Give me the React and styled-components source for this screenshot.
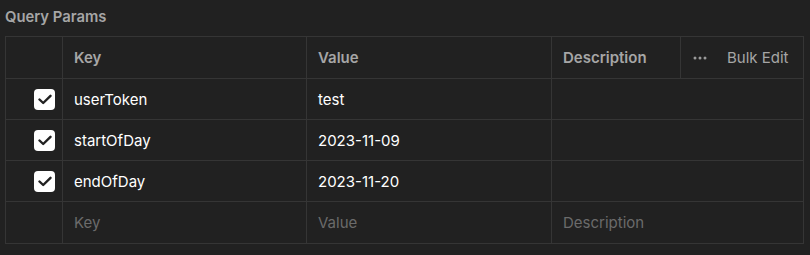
import React from "react";
import styled, { createGlobalStyle } from "styled-components";

const Global = createGlobalStyle`
  html, body {
    margin: 0;
    background: #212121;
  }
  body {
    font-family: Inter, "Noto Sans", sans-serif;
    -webkit-font-smoothing: antialiased;
  }
`;

const Page = styled.div`
  padding: 0 6px 0 5px;
  width: 810px;
  height: 255px;
  box-sizing: border-box;
`;

const Title = styled.div`
  height: 36px;
  line-height: 35px;
  font-size: 14.8px;
  font-weight: 600;
  color: #a6a6a6;
`;

const Table = styled.div`
  border: 1px solid #353535;
  width: 799px;
  box-sizing: border-box;
`;

const Row = styled.div`
  display: grid;
  grid-template-columns: ${(p) => (p.$head ? "57px 244px 245px 129px 1fr" : "57px 244px 245px 1fr")};
  height: ${(p) => (p.$head ? "42px" : "41px")};
  border-bottom: ${(p) => (p.$last ? "none" : "1px solid #353535")};
  box-sizing: border-box;
`;

const Cell = styled.div`
  display: flex;
  align-items: center;
  padding: 0 11px;
  border-right: ${(p) => (p.$end ? "none" : "1px solid #353535")};
  font-size: 15px;
  font-weight: ${(p) => (p.$head ? 600 : 400)};
  color: ${(p) => (p.$head ? "#a6a6a6" : p.$ph ? "#6b6b6b" : "#ffffff")};
  overflow: hidden;
  white-space: nowrap;
`;

const CheckCell = styled(Cell)`
  justify-content: flex-end;
  padding: 0 7px 0 0;
`;

const Box = styled.div`
  width: 21px;
  height: 21px;
  border-radius: 4px;
  background: #ffffff;
  display: flex;
  align-items: center;
  justify-content: center;
`;

const Bulk = styled(Cell)`
  padding: 0 0 0 12px;
  gap: 20px;
  font-weight: 400;
`;

const Dots = () => (
  <svg width="14" height="4" viewBox="0 0 14 4">
    {[2, 7, 12].map((x) => (
      <circle key={x} cx={x} cy="2" r="1.5" fill="#9a9a9a" />
    ))}
  </svg>
);

const Check = () => (
  <svg width="14" height="11" viewBox="0 0 14 11">
    <path d="M1.5 5.5 L5.2 9 L12.5 1.8" stroke="#212121" strokeWidth="2.4" fill="none" strokeLinecap="round" strokeLinejoin="round" />
  </svg>
);

const rows = [
  ["userToken", "test"],
  ["startOfDay", "2023-11-09"],
  ["endOfDay", "2023-11-20"],
];

export default function App() {
  return (
    <Page>
      <Global />
      <Title>Query Params</Title>
      <Table>
        <Row $head>
          <Cell />
          <Cell $head>Key</Cell>
          <Cell $head>Value</Cell>
          <Cell $head>Description</Cell>
          <Bulk $head $end>
            <Dots />
            Bulk Edit
          </Bulk>
        </Row>
        {rows.map(([k, v]) => (
          <Row key={k}>
            <CheckCell>
              <Box>
                <Check />
              </Box>
            </CheckCell>
            <Cell>{k}</Cell>
            <Cell>{v}</Cell>
            <Cell $end />
          </Row>
        ))}
        <Row $last>
          <Cell />
          <Cell $ph>Key</Cell>
          <Cell $ph>Value</Cell>
          <Cell $ph $end>Description</Cell>
        </Row>
      </Table>
    </Page>
  );
}
